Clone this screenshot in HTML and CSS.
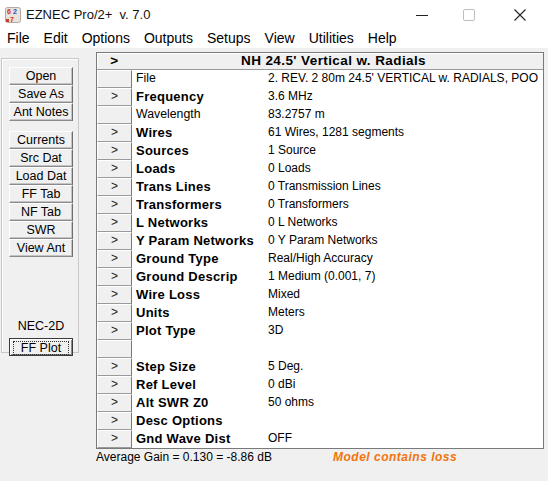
FILE: index.html
```html
<!DOCTYPE html>
<html>
<head>
    <meta charset="UTF-8">
    <title>EZNEC Pro/2+ v. 7.0</title>
    <link rel="stylesheet" href="styles.css">
</head>
<body>
<div class="window">
    <!-- 标题栏 -->
    <div class="titlebar">
        <svg class="app-icon" width="16" height="16" viewBox="0 0 16 16">
            <rect x="0.5" y="0.5" width="15" height="15" rx="2" fill="#e8e2dc" stroke="#b8a8a0"/>
            <text x="2" y="7" font-size="7" font-family="Liberation Sans, sans-serif" font-weight="bold" fill="#d03020">6</text>
            <text x="8" y="7" font-size="7" font-family="Liberation Sans, sans-serif" font-weight="bold" fill="#3050c0">2</text>
            <text x="5" y="14.5" font-size="7" font-family="Liberation Sans, sans-serif" font-weight="bold" fill="#d03020">7</text>
            <rect x="1" y="12" width="3" height="3" fill="#c04030"/>
        </svg>
        <span class="title">EZNEC Pro/2+ &nbsp;v. 7.0</span>
        <div class="controls">
            <span class="ctl ctl-min"><svg width="12" height="12" viewBox="0 0 12 12"><path d="M0 6.5h12" stroke="#222" stroke-width="1"/></svg></span>
            <span class="ctl ctl-max"><svg width="12" height="12" viewBox="0 0 12 12"><rect x="0.5" y="0.5" width="11" height="11" rx="1.5" fill="none" stroke="#bdbdbd"/></svg></span>
            <span class="ctl ctl-close"><svg width="12" height="12" viewBox="0 0 12 12"><path d="M0.5 0.5L11.5 11.5M11.5 0.5L0.5 11.5" stroke="#222" stroke-width="1.1"/></svg></span>
        </div>
    </div>

    <!-- 菜单 -->
    <div class="menubar">
        <span>File</span>
        <span>Edit</span>
        <span>Options</span>
        <span>Outputs</span>
        <span>Setups</span>
        <span>View</span>
        <span>Utilities</span>
        <span>Help</span>
    </div>

    <div class="main">
        <!-- 左侧按钮 -->
        <div class="tools">
            <div class="group">
                <div class="tool">Open</div>
                <div class="tool">Save As</div>
                <div class="tool">Ant Notes</div>
            </div>
            <div class="group">
                <div class="tool">Currents</div>
                <div class="tool">Src Dat</div>
                <div class="tool">Load Dat</div>
                <div class="tool">FF Tab</div>
                <div class="tool">NF Tab</div>
                <div class="tool">SWR</div>
                <div class="tool">View Ant</div>
            </div>
            <div class="engine">NEC-2D</div>
            <div class="tool tool-default"><span>FF Plot</span></div>
        </div>

        <!-- 主表格 -->
        <div class="sheet">
            <div class="grid">
                <div class="head">
                    <span class="head-btn">&gt;</span>
                    <span class="head-title">NH 24.5' Vertical w. Radials</span>
                </div>
                <div class="row"><span class="cell-btn"></span><span class="label plain">File</span><span class="value">2. REV. 2 80m 24.5' VERTICAL w. RADIALS, POO</span></div>
                <div class="row"><span class="cell-btn">&gt;</span><span class="label">Frequency</span><span class="value">3.6 MHz</span></div>
                <div class="row"><span class="cell-btn"></span><span class="label plain">Wavelength</span><span class="value">83.2757 m</span></div>
                <div class="row"><span class="cell-btn">&gt;</span><span class="label">Wires</span><span class="value">61 Wires, 1281 segments</span></div>
                <div class="row"><span class="cell-btn">&gt;</span><span class="label">Sources</span><span class="value">1 Source</span></div>
                <div class="row"><span class="cell-btn">&gt;</span><span class="label">Loads</span><span class="value">0 Loads</span></div>
                <div class="row"><span class="cell-btn">&gt;</span><span class="label">Trans Lines</span><span class="value">0 Transmission Lines</span></div>
                <div class="row"><span class="cell-btn">&gt;</span><span class="label">Transformers</span><span class="value">0 Transformers</span></div>
                <div class="row"><span class="cell-btn">&gt;</span><span class="label">L Networks</span><span class="value">0 L Networks</span></div>
                <div class="row"><span class="cell-btn">&gt;</span><span class="label">Y Param Networks</span><span class="value">0 Y Param Networks</span></div>
                <div class="row"><span class="cell-btn">&gt;</span><span class="label">Ground Type</span><span class="value">Real/High Accuracy</span></div>
                <div class="row"><span class="cell-btn">&gt;</span><span class="label">Ground Descrip</span><span class="value">1 Medium (0.001, 7)</span></div>
                <div class="row"><span class="cell-btn">&gt;</span><span class="label">Wire Loss</span><span class="value">Mixed</span></div>
                <div class="row"><span class="cell-btn">&gt;</span><span class="label">Units</span><span class="value">Meters</span></div>
                <div class="row"><span class="cell-btn">&gt;</span><span class="label">Plot Type</span><span class="value">3D</span></div>
                <div class="row"><span class="cell-btn"></span><span class="label"></span><span class="value"></span></div>
                <div class="row"><span class="cell-btn">&gt;</span><span class="label">Step Size</span><span class="value">5 Deg.</span></div>
                <div class="row"><span class="cell-btn">&gt;</span><span class="label">Ref Level</span><span class="value">0 dBi</span></div>
                <div class="row"><span class="cell-btn">&gt;</span><span class="label">Alt SWR Z0</span><span class="value">50 ohms</span></div>
                <div class="row"><span class="cell-btn">&gt;</span><span class="label">Desc Options</span><span class="value"></span></div>
                <div class="row"><span class="cell-btn">&gt;</span><span class="label">Gnd Wave Dist</span><span class="value">OFF</span></div>
            </div>
            <div class="status">
                <span class="gain">Average Gain = 0.130 = -8.86 dB</span>
                <span class="loss">Model contains loss</span>
            </div>
        </div>
    </div>
</div>
</body>
</html>
```

FILE: styles.css
```css
/* 页面基础 */
body {
    margin: 0;
    background-color: #f0f0f0;
    font-family: "Liberation Sans", Arial, sans-serif;
    font-size: 12px;
    color: #000;
}
.window {
    width: 548px;
    height: 481px;
    overflow: hidden;
}

/* 标题栏 */
.titlebar {
    height: 29px;
    background-color: #fff;
    display: flex;
    align-items: center;
}
.app-icon {
    margin-left: 5px;
    margin-right: 5px;
}
.title {
    font-size: 13px;
    color: #111;
}
.controls {
    margin-left: auto;
    display: flex;
    height: 29px;
}
.ctl {
    display: flex;
    align-items: center;
    justify-content: center;
    width: 47px;
}
.ctl-close {
    width: 56px;
}

/* 菜单栏 */
.menubar {
    height: 18px;
    background-color: #fff;
    display: flex;
    align-items: center;
    font-size: 14px;
    padding-bottom: 1px;
}
.menubar span {
    padding: 0 7px;
}

/* 主区域 */
.main {
    display: flex;
    padding-top: 4px;
}

/* 左侧按钮面板 */
.tools {
    box-sizing: border-box;
    width: 78px;
    height: 295px;
    margin-left: 1px;
    margin-top: 6px;
    border: 1px solid #c8c8c8;
    box-shadow: inset 1px 1px 0 #fff;
    padding: 8px 0 0 7px;
    display: flex;
    flex-direction: column;
}
.group {
    margin-bottom: 10px;
}
.tool {
    box-sizing: border-box;
    width: 64px;
    height: 18px;
    line-height: 16px;
    text-align: center;
    background-color: #f0f0f0;
    border: 1px solid;
    border-color: #fff #6e6e6e #8a8a8a #fff;
    box-shadow: inset -1px -1px 0 #c4c4c4;
    white-space: nowrap;
    font-size: 12.5px;
}
.engine {
    margin-top: 51px;
    text-align: center;
    width: 64px;
    height: 16px;
    line-height: 16px;
    margin-bottom: 4px;
    font-size: 12.5px;
}
.tool-default {
    border: 1px solid #3a3a3a;
    box-shadow: inset 1px 1px 0 #fff, inset -1px -1px 0 #8a8a8a;
    line-height: 14px;
    padding: 1px;
}
.tool-default span {
    display: block;
    border: 1px dotted #333;
    line-height: 12px;
    margin: 1px 2px;
}

/* 数据表格 */
.sheet {
    margin-left: 17px;
    width: 448px;
}
.grid {
    border: 1px solid #7a7a7a;
    background-color: #fff;
}
.head {
    display: flex;
    background-color: #f0f0f0;
    border-bottom: 1px solid #9a9a9a;
    box-shadow: inset 1px 1px 0 #fff;
    box-sizing: border-box;
    height: 17px;
    font-weight: bold;
    font-size: 13.5px;
    letter-spacing: 0.4px;
    line-height: 16px;
}
.head-btn {
    width: 35px;
    text-align: center;
}
.head-title {
    flex: 1;
    text-align: center;
    padding-right: 8px;
}
.row {
    display: flex;
    height: 18px;
    line-height: 17px;
}
.cell-btn {
    box-sizing: border-box;
    width: 35px;
    background-color: #f0f0f0;
    border-top: 1px solid #fff;
    border-left: 1px solid #fff;
    border-right: 1px solid #7a7a7a;
    border-bottom: 1px solid #9a9a9a;
    text-align: center;
    line-height: 15px;
    color: #222;
}
.label {
    width: 134px;
    padding-left: 4px;
    box-sizing: border-box;
    font-weight: bold;
    font-size: 13px;
    letter-spacing: 0.25px;
    white-space: nowrap;
}
.label.plain {
    font-weight: normal;
    font-size: 12.3px;
    letter-spacing: 0;
}
.value {
    flex: 1;
    padding-left: 2px;
    white-space: nowrap;
    overflow: hidden;
}

/* 状态行 */
.status {
    display: flex;
    height: 18px;
    line-height: 17px;
    white-space: nowrap;
}
.gain {
    width: 237px;
}
.loss {
    color: #f07410;
    font-weight: bold;
    font-style: italic;
    letter-spacing: 0.5px;
}
```
